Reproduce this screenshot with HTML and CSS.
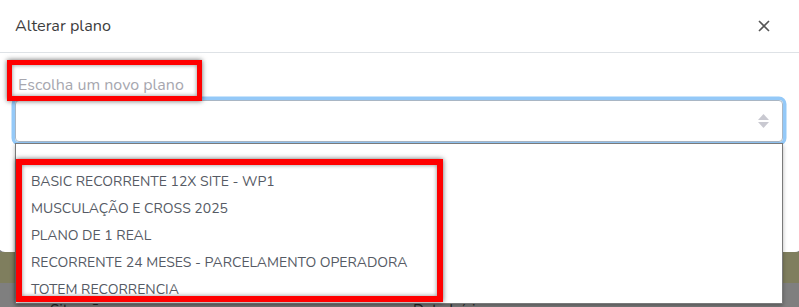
FILE: index.html
```html
<!DOCTYPE html>
<html lang="pt-BR">
<head>
<meta charset="utf-8">
<title>Alterar plano</title>
<link rel="stylesheet" href="styles.css">
</head>
<body>
<div class="page">
  <div class="modal">
    <div class="modal-header">
      <h5 class="modal-title">Alterar plano</h5>
      <button class="close-btn" aria-label="Fechar">
        <svg width="12" height="12" viewBox="0 0 12 12"><path d="M1 1L11 11M11 1L1 11" stroke="#555" stroke-width="1.6" fill="none"/></svg>
      </button>
    </div>
    <div class="modal-body">
      <label class="field-label">Escolha um novo plano</label>
      <div class="select-box">
        <svg class="select-arrows" width="11" height="14" viewBox="0 0 11 14"><path d="M5.5 0L11 6H0Z" fill="#c9c9d1"/><path d="M0 8H11L5.5 14Z" fill="#c9c9d1"/></svg>
      </div>
    </div>
  </div>
  <div class="band"></div>
  <div class="under">
    <span class="th th-sit">Situação</span>
    <span class="th th-data">Data Início</span>
  </div>

  <ul class="dropdown">
    <li>BASIC RECORRENTE 12X SITE - WP1</li>
    <li>MUSCULAÇÃO E CROSS 2025</li>
    <li>PLANO DE 1 REAL</li>
    <li>RECORRENTE 24 MESES - PARCELAMENTO OPERADORA</li>
    <li>TOTEM RECORRENCIA</li>
  </ul>

  <div class="mark mark-label"></div>
  <div class="mark mark-list"></div>
</div>
</body>
</html>
```

FILE: styles.css
```css
* { box-sizing: border-box; }
html, body {
  margin: 0;
  padding: 0;
}
body {
  width: 799px;
  height: 307px;
  overflow: hidden;
  background: #7f7f7f;
  font-family: "Nunito", "Lato", "Open Sans", sans-serif;
}
.page {
  position: relative;
  display: flow-root;
  width: 799px;
  height: 307px;
  overflow: hidden;
}
.modal {
  margin: -3px -3px 0 -2px;
  height: 255px;
  background: #fff;
  border-radius: 7px;
}
.modal-header {
  height: 56px;
  border-bottom: 1px solid #dee2e6;
  display: flex;
  align-items: center;
  justify-content: space-between;
  padding: 2px 32px 0 17px;
}
.modal-title {
  margin: 0;
  font-size: 16.2px;
  font-weight: 400;
  color: #3d3d3d;
}
.close-btn {
  border: 0;
  background: none;
  padding: 0;
  width: 12px;
  height: 12px;
  display: flex;
}
.modal-body {
  padding: 18px 18px 0 17px;
}
.field-label {
  display: block;
  font-size: 16px;
  color: #a7a7af;
  line-height: 20px;
  margin: 4px 0 5px 3px;
}
.select-box {
  height: 42px;
  width: 768px;
  border: 1px solid #a9b6c4;
  border-radius: 4px;
  box-shadow: 0 0 0 3.5px #94c9f8;
  display: flex;
  align-items: center;
  justify-content: flex-end;
  padding-right: 13px;
}
.band {
  height: 31px;
  background: #7f7e5e;
}
.under {
  display: flex;
  padding: 17px 0 0 50px;
  height: 60px;
}
.th {
  font-size: 15px;
  color: #262626;
  line-height: 20px;
}
.th-sit { width: 363px; }

.dropdown {
  position: absolute;
  left: 15px;
  top: 143px;
  width: 768px;
  height: 161px;
  margin: 0;
  padding: 24px 0 0 15px;
  list-style: none;
  background: #fff;
  border: 1px solid #7a7a7a;
  box-shadow: 0 2px 4px rgba(0,0,0,0.3);
  overflow: hidden;
}
.dropdown li {
  font-size: 14px;
  line-height: 27px;
  color: #555a64;
}
.mark {
  position: absolute;
  border: 5px solid #ff0000;
  box-shadow: 0 0 5px rgba(0,0,0,0.6), inset 0 0 4px rgba(0,0,0,0.45);
}
.mark-label {
  left: 7px;
  top: 60px;
  width: 195px;
  height: 41px;
}
.mark-list {
  left: 16px;
  top: 159px;
  width: 427px;
  height: 143px;
  border-width: 6px;
}
```
